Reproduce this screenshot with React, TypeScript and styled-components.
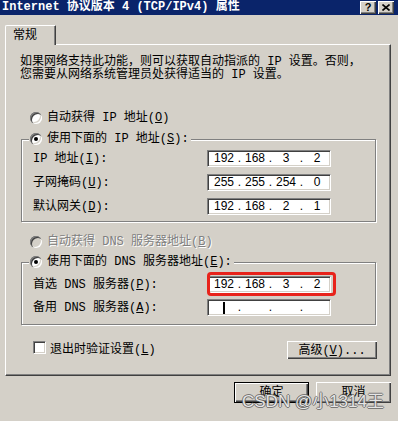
import React from "react";
import styled, { createGlobalStyle } from "styled-components";

const FACE = "#D4D0C8";
const SHADOW = "#808080";
const DARK = "#404040";

const Global = createGlobalStyle`
  html, body { margin: 0; padding: 0; background: ${FACE}; }
  body {
    font-family: "Liberation Mono", "Noto Sans CJK SC", monospace;
    font-size: 12px;
    color: #000;
  }
  u { text-decoration: underline; text-underline-offset: 1px; }
`;

const Window = styled.div`
  position: relative;
  width: 398px;
  height: 421px;
  background: ${FACE};
  overflow: hidden;
  display: flex;
  flex-direction: column;
`;

const TitleBar = styled.div`
  height: 15px;
  flex: none;
  background: #0a246a;
  display: flex;
  align-items: center;
  justify-content: space-between;
  padding: 0 4px 0 2px;
`;

const TitleText = styled.div`
  color: #fff;
  font-weight: bold;
  font-size: 12px;
  line-height: 15px;
  white-space: pre;
`;

const CaptionButtons = styled.div`
  display: flex;
  gap: 2px;
  align-self: flex-start;
  margin-top: 1px;
`;

const CaptionButton = styled.div`
  width: 16px;
  height: 13px;
  box-sizing: border-box;
  background: ${FACE};
  box-shadow: inset 1px 1px 0 #fff, inset -1px -1px 0 ${DARK}, inset -2px -2px 0 ${SHADOW};
  display: flex;
  align-items: center;
  justify-content: center;
  color: #000;
  font-family: "Liberation Sans", Arial, sans-serif;
  font-weight: bold;
  font-size: 11px;
  line-height: 11px;
`;

const TabStrip = styled.div`
  display: flex;
  padding: 10px 0 0 5px;
  position: relative;
  z-index: 1;
`;

const Tab = styled.div`
  width: 51px;
  height: 20px;
  box-sizing: border-box;
  margin-bottom: -1px;
  background: ${FACE};
  border-left: 1px solid #fff;
  border-top: 1px solid #fff;
  border-right: 1px solid ${DARK};
  border-top-left-radius: 2px;
  border-top-right-radius: 1px;
  box-shadow: inset -1px 0 0 ${SHADOW};
  padding-left: 7px;
  font-family: "Noto Sans CJK SC", sans-serif;
  font-size: 12px;
  line-height: 14px;
  padding-top: 1px;
`;

const Panel = styled.div`
  margin: 0 7px 0 5px;
  box-sizing: border-box;
  border: 1px solid;
  border-color: #fff ${DARK} ${DARK} #fff;
  box-shadow: inset -1px -1px 0 ${SHADOW};
  padding: 11px 13px 16px 15px;
  display: flex;
  flex-direction: column;
`;

const Description = styled.div`
  line-height: 13px;
  margin-left: -1px;
  white-space: nowrap;
`;

const OptionRow = styled.div<{ $mt?: number; $ml?: number; $disabled?: boolean }>`
  display: flex;
  align-items: center;
  gap: 5px;
  height: 16px;
  margin-top: ${(p) => p.$mt ?? 0}px;
  margin-left: ${(p) => p.$ml ?? 0}px;
  color: ${(p) => (p.$disabled ? SHADOW : "#000")};
  text-shadow: ${(p) => (p.$disabled ? "1px 1px 0 #fff" : "none")};
  white-space: nowrap;
  line-height: 16px;
`;

const RadioCircle = styled.span<{ $checked?: boolean; $disabled?: boolean }>`
  width: 12px;
  height: 12px;
  flex: none;
  border-radius: 50%;
  background: ${(p) => (p.$disabled ? FACE : "#fff")};
  box-shadow: inset 1px 1px 0 ${SHADOW}, inset 2px 2px 0 ${DARK}, inset -1px -1px 0 #fff,
    inset -2px -2px 0 ${FACE};
  display: flex;
  align-items: center;
  justify-content: center;
  &::after {
    content: "";
    width: 4px;
    height: 4px;
    border-radius: 50%;
    background: #000;
    display: ${(p) => (p.$checked ? "block" : "none")};
  }
`;

const Group = styled.fieldset<{ $mt: number }>`
  margin: ${(p) => p.$mt}px 1px 0 0;
  padding: 0;
  min-inline-size: 0;
  border: 1px solid ${SHADOW};
  box-shadow: inset 1px 1px 0 #fff, 1px 1px 0 #fff;
`;

const Legend = styled.legend`
  margin-left: 7px;
  padding: 0 2px 0 1px;
  background: ${FACE};
`;

const FieldGrid = styled.div<{ $pt: number; $pb: number; $gap: number }>`
  display: grid;
  grid-template-columns: 174px 124px;
  row-gap: ${(p) => p.$gap}px;
  align-items: center;
  padding: ${(p) => p.$pt}px 0 ${(p) => p.$pb}px 11px;
`;

const Label = styled.div`
  line-height: 16px;
  white-space: nowrap;
`;

const FieldCell = styled.div`
  position: relative;
`;

const Field = styled.div`
  width: 124px;
  height: 17px;
  box-sizing: border-box;
  background: #fff;
  border: 1px solid;
  border-color: ${SHADOW} #fff #fff ${SHADOW};
  box-shadow: inset 1px 1px 0 ${DARK}, inset -1px -1px 0 ${FACE};
  display: flex;
  align-items: center;
  padding-left: 4px;
  font-family: "Liberation Sans", Arial, sans-serif;
  font-size: 12px;
  line-height: 13px;
`;

const Octet = styled.span`
  width: 24px;
  text-align: center;
  display: flex;
  justify-content: center;
  align-items: center;
`;

const Dot = styled.span`
  width: 7px;
  text-align: center;
`;

const Caret = styled.span`
  display: block;
  width: 2px;
  height: 12px;
  background: #000;
`;

const Highlight = styled.div`
  position: absolute;
  left: 0;
  top: -4px;
  width: 129px;
  height: 24px;
  box-sizing: border-box;
  border: 3px solid #e8231b;
  border-radius: 4px;
  pointer-events: none;
`;

const BottomRow = styled.div`
  display: flex;
  justify-content: space-between;
  align-items: flex-start;
  margin-top: 16px;
`;

const CheckRow = styled.div`
  display: flex;
  align-items: center;
  gap: 4px;
  height: 13px;
  margin-left: 12px;
  white-space: nowrap;
`;

const CheckBox = styled.span`
  width: 13px;
  height: 13px;
  box-sizing: border-box;
  background: #fff;
  border: 1px solid;
  border-color: ${SHADOW} #fff #fff ${SHADOW};
  box-shadow: inset 1px 1px 0 ${DARK}, inset -1px -1px 0 ${FACE};
`;

const Button = styled.div<{ $w: number; $h: number; $default?: boolean }>`
  width: ${(p) => p.$w}px;
  height: ${(p) => p.$h}px;
  box-sizing: border-box;
  background: ${FACE};
  border: 1px solid ${(p) => (p.$default ? "#000" : "transparent")};
  box-shadow: ${(p) =>
    p.$default
      ? `inset 1px 1px 0 #fff, inset -1px -1px 0 ${DARK}, inset -2px -2px 0 ${SHADOW}`
      : `inset 1px 1px 0 #fff, inset -1px -1px 0 ${DARK}, inset -2px -2px 0 ${SHADOW}`};
  ${(p) => (p.$default ? "" : `border: none;`)}
  display: flex;
  align-items: center;
  justify-content: center;
  padding-top: 1px;
  white-space: nowrap;
  line-height: 14px;
`;

const Footer = styled.div`
  display: flex;
  justify-content: flex-end;
  gap: 7px;
  margin-top: 6px;
  padding-right: 7px;
`;

const Watermark = styled.div`
  position: absolute;
  left: 242px;
  top: 392px;
  font-family: "Liberation Sans", "Noto Sans CJK SC", sans-serif;
  font-size: 17px;
  line-height: 19px;
  color: rgba(255, 255, 255, 0.85);
  text-shadow: -1px 0 0 rgba(90, 90, 90, 0.75), 1px 0 0 rgba(90, 90, 90, 0.75),
    0 -1px 0 rgba(90, 90, 90, 0.75), 0 1px 0 rgba(90, 90, 90, 0.75);
  white-space: nowrap;
  pointer-events: none;
`;

type Ip = [string, string, string, string];

function IpField({ value, caret, highlight }: { value?: Ip; caret?: boolean; highlight?: boolean }) {
  const v = value ?? ["", "", "", ""];
  return (
    <FieldCell>
      <Field>
        {v.map((o, i) => (
          <React.Fragment key={i}>
            <Octet>{i === 0 && caret ? <Caret /> : o}</Octet>
            {i < 3 && <Dot>.</Dot>}
          </React.Fragment>
        ))}
      </Field>
      {highlight && <Highlight />}
    </FieldCell>
  );
}

export default function App() {
  return (
    <>
      <Global />
      <Window>
        <TitleBar>
          <TitleText>Internet 协议版本 4 (TCP/IPv4) 属性</TitleText>
          <CaptionButtons>
            <CaptionButton>?</CaptionButton>
            <CaptionButton>
              <svg width="8" height="7" viewBox="0 0 8 7">
                <path d="M0.5 0.5 L7.5 6.5 M7.5 0.5 L0.5 6.5" stroke="#000" strokeWidth="1.6" />
              </svg>
            </CaptionButton>
          </CaptionButtons>
        </TitleBar>
        <TabStrip>
          <Tab>常规</Tab>
        </TabStrip>
        <Panel>
          <Description>
            如果网络支持此功能，则可以获取自动指派的 IP 设置。否则，
            <br />
            您需要从网络系统管理员处获得适当的 IP 设置。
          </Description>
          <OptionRow $mt={28} $ml={9}>
            <RadioCircle />
            <span>
              自动获得 IP 地址(<u>O</u>)
            </span>
          </OptionRow>
          <Group $mt={5}>
            <Legend>
              <OptionRow>
                <RadioCircle $checked />
                <span>
                  使用下面的 IP 地址(<u>S</u>):
                </span>
              </OptionRow>
            </Legend>
            <FieldGrid $pt={3} $pb={6} $gap={7}>
              <Label>
                IP 地址(<u>I</u>):
              </Label>
              <IpField value={["192", "168", "3", "2"]} />
              <Label>
                子网掩码(<u>U</u>):
              </Label>
              <IpField value={["255", "255", "254", "0"]} />
              <Label>
                默认网关(<u>D</u>):
              </Label>
              <IpField value={["192", "168", "2", "1"]} />
            </FieldGrid>
          </Group>
          <OptionRow $mt={12} $ml={9} $disabled>
            <RadioCircle $disabled />
            <span>
              自动获得 DNS 服务器地址(<u>B</u>)
            </span>
          </OptionRow>
          <Group $mt={4}>
            <Legend>
              <OptionRow>
                <RadioCircle $checked />
                <span>
                  使用下面的 DNS 服务器地址(<u>E</u>):
                </span>
              </OptionRow>
            </Legend>
            <FieldGrid $pt={6} $pb={8} $gap={6}>
              <Label>
                首选 DNS 服务器(<u>P</u>):
              </Label>
              <IpField value={["192", "168", "3", "2"]} highlight />
              <Label>
                备用 DNS 服务器(<u>A</u>):
              </Label>
              <IpField caret />
            </FieldGrid>
          </Group>
          <BottomRow>
            <CheckRow>
              <CheckBox />
              <span>
                退出时验证设置(<u>L</u>)
              </span>
            </CheckRow>
            <Button $w={90} $h={18}>
              高级(<u>V</u>)...
            </Button>
          </BottomRow>
        </Panel>
        <Footer>
          <Button $w={75} $h={21} $default>
            确定
          </Button>
          <Button $w={75} $h={21}>
            取消
          </Button>
        </Footer>
        <Watermark>CSDN @小1314王</Watermark>
      </Window>
    </>
  );
}
